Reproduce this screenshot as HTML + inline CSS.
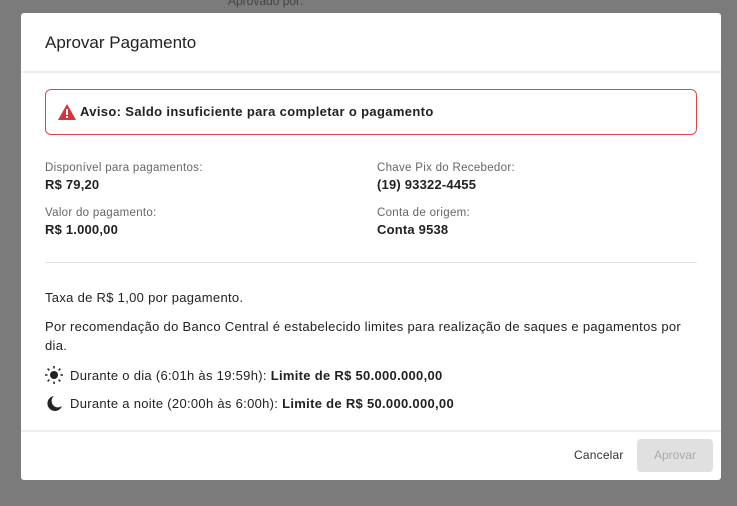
<!DOCTYPE html>
<html><head><style>
body{margin:0;width:737px;height:506px;background:#7b7b7b;font-family:"Liberation Sans",sans-serif;position:relative;overflow:hidden;color:#222}
.bgt{position:absolute;left:228px;top:-6px;font-size:12px;color:#444}
.modal{position:absolute;left:21px;top:13px;width:700px;height:467px;background:#fff;border-radius:3px}
.a{position:absolute;white-space:nowrap}
.lab{font-size:11.5px;color:#666;letter-spacing:0.3px}
.val{font-size:13px;font-weight:bold;color:#222;letter-spacing:0.2px}
.t{font-size:13px;color:#222;letter-spacing:0.3px}
</style></head><body>
<div class="bgt">Aprovado por:</div>
<div class="modal">
<div class="a" style="left:24px;top:20px;font-size:17px;color:#222">Aprovar Pagamento</div>
<div class="a" style="left:0;top:58px;width:700px;height:2px;background:#eee"></div>
<div class="a" style="left:24px;top:76px;width:650px;height:44px;border:1px solid #e0454f;border-radius:6px"></div>
<svg class="a" style="left:37px;top:91px" width="18" height="16" viewBox="0 0 18 16"><path d="M9 0L18 16H0Z" fill="#d8323c"/><rect x="8" y="5" width="2" height="6" fill="#fff"/><rect x="8" y="12" width="2" height="2" fill="#fff"/></svg>
<div class="a val" style="left:59px;top:91px;letter-spacing:0.35px">Aviso: Saldo insuficiente para completar o pagamento</div>
<div class="a lab" style="left:24px;top:149px">Disponível para pagamentos:</div>
<div class="a val" style="left:24px;top:164px">R$ 79,20</div>
<div class="a lab" style="left:24px;top:194px">Valor do pagamento:</div>
<div class="a val" style="left:24px;top:209px">R$ 1.000,00</div>
<div class="a lab" style="left:356px;top:149px">Chave Pix do Recebedor:</div>
<div class="a val" style="left:356px;top:164px">(19) 93322-4455</div>
<div class="a lab" style="left:356px;top:194px">Conta de origem:</div>
<div class="a val" style="left:356px;top:209px">Conta 9538</div>
<div class="a" style="left:24px;top:249px;width:652px;height:1px;background:#e4e4e4"></div>
<div class="a t" style="left:24px;top:277px">Taxa de R$ 1,00 por pagamento.</div>
<div class="a t" style="left:24px;top:306px">Por recomendação do Banco Central é estabelecido limites para realização de saques e pagamentos por</div>
<div class="a t" style="left:24px;top:325px">dia.</div>
<svg class="a" style="left:24px;top:353px" width="18" height="18" viewBox="0 0 18 18"><circle cx="9" cy="9" r="4" fill="#222"/><g stroke="#222" stroke-width="1.5"><path d="M9 0v2.5M9 15.5V18M0 9h2.5M15.5 9H18M2.6 2.6l1.8 1.8M13.6 13.6l1.8 1.8M2.6 15.4l1.8-1.8M13.6 4.4l1.8-1.8"/></g></svg>
<div class="a t" style="left:49px;top:355px">Durante o dia (6:01h às 19:59h): <b>Limite de R$ 50.000.000,00</b></div>
<svg class="a" style="left:25px;top:382px" width="17" height="17" viewBox="0 0 17 17"><path d="M8 1A7.5 7.5 0 1 0 16 11 6 6 0 0 1 8 1Z" fill="#222"/></svg>
<div class="a t" style="left:49px;top:383px">Durante a noite (20:00h às 6:00h): <b>Limite de R$ 50.000.000,00</b></div>
<div class="a" style="left:0;top:417px;width:700px;height:2px;background:#eee"></div>
<div class="a" style="left:553px;top:435px;font-size:12px;color:#333;letter-spacing:0.2px">Cancelar</div>
<div class="a" style="left:616px;top:426px;width:76px;height:33px;background:#e0e0e0;border-radius:4px;color:#aaa;font-size:12px;text-align:center;line-height:33px">Aprovar</div>
</div>
</body></html>
